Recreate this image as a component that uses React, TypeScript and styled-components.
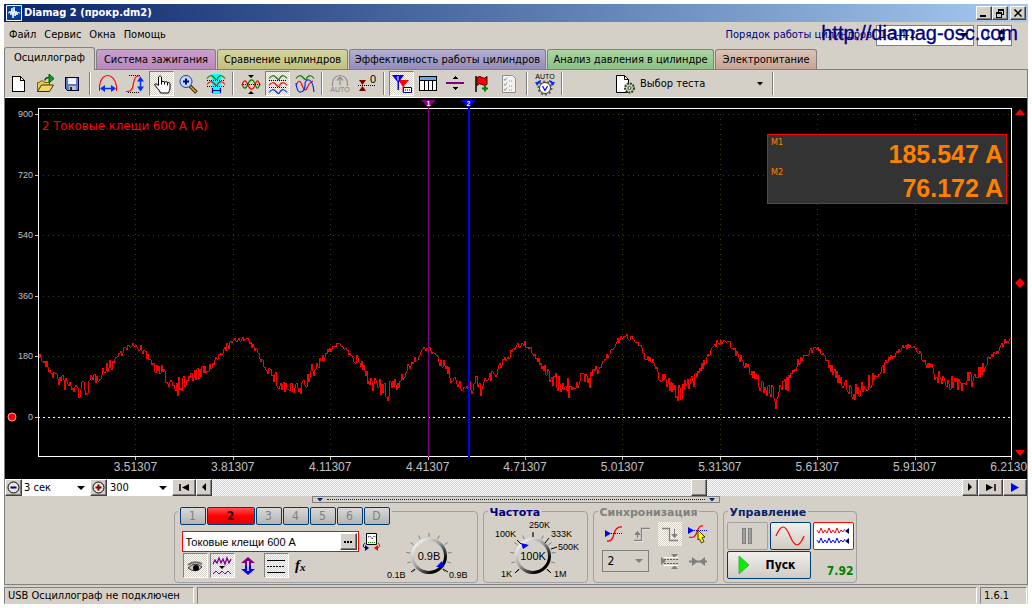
import React from "react";
import styled, { createGlobalStyle, css } from "styled-components";

const face = "#d4d0c8";
const ui = `"DejaVu Sans Condensed", "DejaVu Sans", sans-serif`;
const arial = `"Liberation Sans", Arial, sans-serif`;
const dither = `repeating-conic-gradient(#ffffff 0% 25%, ${face} 0% 50%) 0 0 / 2px 2px`;

const GlobalStyle = createGlobalStyle`
  * { box-sizing: border-box; }
  body { margin: 0; background: #fff; font: 11px/14px ${ui}; color: #000; }
  button, select, input { font: inherit; color: inherit; margin: 0; padding: 0; border-radius: 0; }
  svg { display: block; flex: none; }
`;

const raised = css`
  background: ${face};
  border: 1px solid;
  border-color: #fff #404040 #404040 #fff;
  box-shadow: inset -1px -1px 0 #808080;
`;

const Page = styled.div`padding: 4px 4px 5px 4px;`;
const Window = styled.div`background: ${face}; display: flex; flex-direction: column;`;

const TitleBar = styled.header`
  height: 18px;
  display: flex;
  align-items: center;
  gap: 2px;
  padding: 0 2px;
  background: linear-gradient(90deg, #0a246a, #a6caf0);
  color: #fff;
`;
const WindowTitle = styled.h1`margin: 0; flex: 1; font: bold 11px/16px ${ui};`;
const CaptionButton = styled.button<{ $apart?: boolean }>`
  ${raised}
  width: 16px;
  height: 14px;
  display: flex;
  align-items: center;
  justify-content: center;
  margin-left: ${(p) => (p.$apart ? 0 : -2)}px;
`;

const MenuRow = styled.div`
  position: relative;
  height: 26px;
  display: flex;
  align-items: center;
  padding: 0 16px 0 5px;
`;
const Menu = styled.nav`display: flex; gap: 8px; flex: 1;`;
const MenuItem = styled.button`border: 0; background: none;`;
const OrderLabel = styled.label`color: #000080; margin-right: 4px;`;
const SiteLink = styled.a`
  position: absolute;
  right: 10px;
  top: 0;
  font: 20px/22px ${arial};
  color: #000080;
  text-decoration: none;
  -webkit-text-stroke: 0.3px #000080;
`;
const SelectBox = styled.span<{ $w: number; $h: number; $framed?: boolean; $gap?: number; $off?: boolean }>`
  display: grid;
  align-items: center;
  width: ${(p) => p.$w}px;
  height: ${(p) => p.$h}px;
  margin-right: ${(p) => p.$gap ?? 0}px;
  background: ${(p) => (p.$off ? face : "#fff")};
  border: ${(p) => (p.$framed ? "1px solid #808080" : "0")};
  &::after {
    content: "";
    grid-area: 1 / 1;
    justify-self: end;
    margin-right: 5px;
    border: 4px solid transparent;
    border-top-color: ${(p) => (p.$off ? "#808080" : "#000")};
    border-bottom: 0;
    pointer-events: none;
  }
`;
const Select = styled.select<{ $pad?: number }>`
  appearance: none;
  grid-area: 1 / 1;
  width: 100%;
  height: 100%;
  border: 0;
  background: none;
  padding-left: ${(p) => p.$pad ?? 3}px;
  outline: 0;
  opacity: 1;
`;
const Spinner = styled.span`
  display: flex;
  align-items: center;
  width: 35px;
  height: 21px;
  padding-right: 6px;
  background: #fff;
  border: 1px solid #808080;
`;
const SpinInput = styled.input`border: 0; width: 20px; text-align: center; background: none; flex: 1;`;

const Tabs = styled.div`
  display: flex;
  align-items: flex-end;
  gap: 1px;
  height: 22px;
  border-bottom: 1px solid #808080;
`;
const Tab = styled.button<{ $w: number; $top: string; $bottom: string; $active?: boolean }>`
  width: ${(p) => p.$w}px;
  height: ${(p) => (p.$active ? 23 : 20)}px;
  margin-bottom: ${(p) => (p.$active ? -1 : 0)}px;
  padding-bottom: ${(p) => (p.$active ? 3 : 0)}px;
  border: 1px solid #808080;
  border-bottom: 0;
  border-radius: 3px 3px 0 0;
  background: linear-gradient(${(p) => p.$top}, ${(p) => p.$bottom});
  white-space: nowrap;
`;

const TabPage = styled.main`
  display: flex;
  flex-direction: column;
  border-left: 1px solid #808080;
  border-right: 1px solid #808080;
`;
const Toolbar = styled.div`
  height: 28px;
  display: flex;
  align-items: center;
  border-bottom: 1px solid #fff;
`;
const ToolButton = styled.button<{ $on?: boolean }>`
  width: 25px;
  height: 25px;
  margin: 0 1px;
  display: flex;
  align-items: center;
  justify-content: center;
  border: 1px solid transparent;
  background: none;
  ${(p) => p.$on && css`background: ${dither}; border-color: #808080 #fff #fff #808080;`}
`;
const Divider = styled.span`
  width: 2px;
  height: 23px;
  margin: 0 3px;
  border-left: 1px solid #808080;
  border-right: 1px solid #fff;
`;
const TestButton = styled.button`
  display: flex;
  align-items: center;
  gap: 4px;
  width: 203px;
  height: 25px;
  padding-left: 50px;
  border: 0;
  background: none;
  & > span { flex: 1; text-align: left; }
`;

const Scope = styled.section`
  position: relative;
  display: grid;
  grid-template-columns: 33px 1fr 15px;
  grid-template-rows: 10px 349px 22px;
  background: #000;
  overflow: hidden;
`;
const YAxis = styled.div`
  grid-area: 2 / 1;
  height: 315px;
  padding-right: 5px;
  display: flex;
  flex-direction: column;
  justify-content: space-between;
  text-align: right;
  font: 9px/12px ${arial};
  color: #c0c0c0;
`;
const YLabel = styled.span`
  display: flex;
  align-items: center;
  justify-content: flex-end;
  gap: 11px;
`;
const PlotArea = styled.div`grid-area: 2 / 2; position: relative;`;
const PlotSvg = styled.svg`width: 100%; height: 349px; overflow: visible;`;
const Cursor = styled.div<{ $at: number; $color: string }>`
  position: absolute;
  left: ${(p) => p.$at}%;
  top: -8px;
  bottom: 0;
  width: 16px;
  margin-left: -8px;
  background: linear-gradient(${(p) => p.$color}, ${(p) => p.$color}) 7px 0 / ${(p) => (p.$color === "#0000ff" ? 2 : 1)}px 100% no-repeat;
`;
const PlotTitle = styled.div`
  position: absolute;
  left: 4px;
  top: 10px;
  font: 13px/16px ${ui};
  color: #f00;
`;
const Meter = styled.div`
  position: absolute;
  right: 5px;
  top: 26px;
  width: 240px;
  height: 70px;
  padding: 1px 3px 0;
  display: grid;
  grid-template-columns: auto 1fr;
  background: #333;
  border: 1px solid #f00;
  color: #ff8000;
`;
const MeterTags = styled.div`
  display: flex;
  flex-direction: column;
  gap: 18px;
  font: 9px/12px ${ui};
`;
const MeterValues = styled.div`text-align: right; padding-top: 1px; font: bold 25px/34px ${arial};`;
const XAxis = styled.div`
  grid-area: 3 / 2;
  display: flex;
  font: 12px/20px ${arial};
  color: #c0c0c0;
`;
const XCell = styled.span`
  flex: 1 1 0;
  display: flex;
  justify-content: flex-end;
  & > span { width: 60px; margin-right: -30px; text-align: center; flex: none; }
`;
const Handles = styled.div`
  grid-area: 2 / 3;
  display: flex;
  flex-direction: column;
  justify-content: space-between;
  align-items: center;
`;

const ScrollRow = styled.div`height: 17px; display: flex; background: #fff;`;
const ScrollButton = styled.button<{ $w: number }>`
  ${raised}
  width: ${(p) => p.$w}px;
  height: 17px;
  display: flex;
  align-items: center;
  justify-content: center;
`;
const Track = styled.div`
  flex: 1;
  display: flex;
  background: ${dither};
  &::before { content: ""; flex: 64 1 0; }
  &::after { content: ""; flex: 34 1 0; }
`;
const Thumb = styled.button`${raised} width: 16px; height: 17px;`;

const Splitter = styled.div`
  align-self: center;
  width: 408px;
  height: 7px;
  display: flex;
  align-items: center;
  gap: 4px;
  padding: 0 4px;
  border: 1px solid #808080;
  & > i { flex: 1; border-top: 1px dotted #0a246a; }
`;
const Panels = styled.div`
  display: flex;
  justify-content: center;
  gap: 5px;
  padding: 8px 2px 1px 0;
  border-bottom: 1px solid #808080;
`;
const Panel = styled.section<{ $w: number }>`
  width: ${(p) => p.$w}px;
  height: 72px;
  border: 1px solid #a0a0a0;
  border-radius: 4px;
  padding: 0 3px;
`;
const PanelTitle = styled.h2<{ $color: string }>`
  width: max-content;
  height: 14px;
  margin: -6px 0 0 1px;
  padding: 0 2px;
  background: ${face};
  font: bold 11px/14px "DejaVu Sans", sans-serif;
  color: ${(p) => p.$color};
`;
const ChannelPanel = styled(Panel)`display: flex;`;
const ChannelControls = styled.div`width: 205px;`;
const ChannelTabs = styled.div`
  display: flex;
  gap: 1px;
  width: 214px;
  margin-top: -5px;
  padding-left: 2px;
  background: ${face};
`;
const ChannelTab = styled.button<{ $on?: boolean }>`
  width: ${(p) => (p.$on ? 48 : 26)}px;
  height: 18px;
  border: 1px solid #003c74;
  border-radius: 2px;
  font: ${(p) => (p.$on ? "bold" : "normal")} 12px/14px ${ui};
  color: ${(p) => (p.$on ? "#300" : "#808080")};
  background: ${(p) => (p.$on ? "linear-gradient(#ff5050, #f00 50%, #e80000)" : "linear-gradient(#d8d8d8, #b4b4b4)")};
`;
const ProbeRow = styled.div`display: flex; align-items: center; gap: 3px; margin-top: 6px; padding-left: 4px;`;
const ProbeField = styled.div`
  width: 177px;
  height: 21px;
  display: flex;
  align-items: center;
  padding: 0 1px 0 3px;
  background: #fff;
  border: 1px solid #f00;
`;
const ProbeInput = styled.input`
  flex: 1;
  min-width: 0;
  border: 0;
  outline: 0;
  background: none;
  font: 11px/16px ${arial};
`;
const MoreButton = styled.button`
  ${raised}
  width: 17px;
  height: 17px;
  display: flex;
  align-items: center;
  justify-content: center;
`;
const ToggleRow = styled.div`display: flex; padding-left: 4px; margin-top: 1px;`;
const KnobSlot = styled.div`margin-top: 15px; padding-left: 3px;`;

const SyncGrid = styled.div`
  display: grid;
  grid-template-columns: repeat(4, 28px);
  align-items: center;
  justify-items: center;
  padding: 2px 0 0 3px;
  row-gap: 3px;
`;
const SyncButton = styled.button<{ $on?: boolean }>`
  width: 24px;
  height: 24px;
  border: 0;
  padding: 2px;
  background: ${(p) => (p.$on ? dither : "none")};
`;
const SyncSelect = styled.div`
  grid-column: span 2;
  justify-self: start;
  padding-left: 2px;
  font: 12px/16px ${ui};
`;

const ControlGrid = styled.div`
  display: grid;
  grid-template-columns: repeat(3, 41px);
  gap: 1px 2px;
  padding-top: 2px;
`;
const ControlButton = styled.button<{ $edge: string; $wide?: boolean; $fill?: string }>`
  grid-column: span ${(p) => (p.$wide ? 2 : 1)};
  height: 28px;
  display: flex;
  align-items: center;
  justify-content: center;
  gap: 16px;
  padding-right: ${(p) => (p.$wide ? 4 : 0)}px;
  border: 1px solid ${(p) => p.$edge};
  border-radius: 2px;
  background: ${(p) => p.$fill ?? "linear-gradient(#f0efec, #d0ccc4)"};
  font: bold 12px/16px ${ui};
`;
const Reading = styled.output`
  align-self: end;
  text-align: right;
  font: bold 12px/16px ${ui};
  color: #008000;
`;

const StatusBar = styled.footer`
  display: flex;
  gap: 3px;
  height: 19px;
  padding: 2px 0 0 0;
  margin-right: 1px;
`;
const StatusCell = styled.div<{ $w?: number }>`
  ${(p) => (p.$w ? `width: ${p.$w}px;` : "flex: 1;")}
  padding: 1px 3px;
  border: 1px solid;
  border-color: #808080 #fff ${face} #808080;
  white-space: nowrap;
`;

/* ---------- icons ---------- */

type IconProps = { w?: number; h?: number; children: React.ReactNode; crisp?: boolean };
const Icon = ({ w = 20, h = 20, children, crisp }: IconProps) => (
  <svg width={w} height={h} viewBox={`0 0 ${w} ${h}`} fill="none" stroke="none" shapeRendering={crisp ? "crispEdges" : "auto"} aria-hidden="true">
    {children}
  </svg>
);

/* hump, dip, hump across an 18px wide line centred on y */
const wave = (y: number) => `M1 ${y + 1}Q4.500 ${y - 4} 8 ${y}T12 ${y}Q15.500 ${y - 4} 19 ${y + 1}`;

const NewIcon = () => (
  <Icon crisp><path d="M3.5 2.5h8l4 4v11h-12z" fill="#fff" stroke="#000" /><path d="M11.5 2.5v4h4" stroke="#000" /></Icon>
);
const OpenIcon = () => (
  <Icon>
    <path d="M1.5 17.5V8.500h2l1-1.500h3l1 1.500h5v3" fill="#e8c850" stroke="#806000" />
    <path d="M1.500 17.500l4-6.500h12l-4 6.500z" fill="#f0d870" stroke="#403000" />
    <path d="M9 6.500q0-3 4-3" stroke="#005000" strokeWidth="1.500" />
    <path d="M13 0l5 4.500-5 4.500z" fill="#00a020" stroke="#006000" />
  </Icon>
);
const SaveIcon = () => (
  <Icon crisp>
    <path d="M2.500 3.500h13v13h-11l-2-2z" fill="#5a7cc0" stroke="#000030" />
    <path d="M5 4h8v6H5z" fill="#f4f4f4" /><path d="M6 12h7v4H6z" fill="#c0c0c0" /><path d="M7 13h2v3H7z" fill="#202040" />
  </Icon>
);
const PeriodIcon = () => (
  <Icon>
    <path d="M1.500 12C3 -2 16 -2 18.500 12" stroke="#f00" strokeWidth="1.200" /><path d="M1.500 12v5M18.500 12v5" stroke="#f00" />
    <path d="M3 14.500h14" stroke="#0030ff" strokeWidth="1.500" /><path d="M2 14.500l5-3.500v7zM18 14.500l-5-3.500v7z" fill="#0030ff" />
  </Icon>
);
const AmplitudeIcon = () => (
  <Icon>
    <path d="M1 17.500h2C11 17 6 3 13 2h2" stroke="#f00" strokeWidth="1.200" />
    <path d="M4 1.500h12M3 18.500h12" stroke="#000" strokeDasharray="1 1" />
    <path d="M15.500 5v10" stroke="#0030ff" strokeWidth="1.500" /><path d="M15.500 2.500l-3.500 5h7zM15.500 17.500l-3.500-5h7z" fill="#0030ff" />
  </Icon>
);
const HandIcon = () => (
  <Icon>
    <path d="M6.500 11.500V3q1.500-2.500 3 0v5q1.500-1.500 3 0 1.500-1 3 .500 1.500-.5 2.500 1v5.500q-.5 1.500-1.500 4h-8q-1-3-3-4.500l-3-4q1-2 4 1" fill="#fff" stroke="#000" />
    <path d="M9.500 7v3.500M12.500 8v2.500M15.500 8.500v3" stroke="#000" />
  </Icon>
);
const ZoomIcon = () => (
  <Icon>
    <path d="M11 12l6.500 6.500" stroke="#302000" strokeWidth="3.500" /><path d="M11.500 12.500l5.500 5.500" stroke="#f0b040" strokeWidth="1.500" />
    <circle cx="7" cy="7.500" r="6" fill="#b8dcff" stroke="#304080" />
    <path d="M7 4.500v6M4 7.500h6" stroke="#000080" strokeWidth="2" />
  </Icon>
);
const FitIcon = () => (
  <Icon>
    <path d="M6 0h9v20H6z" fill="#00ffff" />
    <path d={wave(3.5)} stroke="#008000" strokeWidth="1.200" /><path d={wave(9.5)} stroke="#f00" strokeWidth="1.200" />
    <path d="M1 6.500h18M1 12.500h18" stroke="#000" strokeDasharray="1 1" />
    <path d="M6.500 14v5M14.500 14v5M7 16.500h7" stroke="#000080" strokeWidth="1.200" />
  </Icon>
);
const CrossIcon = () => (
  <Icon>
    <path d="M1 10C3 16 5 15 7 10S12 4 14 10 17 15 19 10" stroke="#008000" strokeWidth="1.200" />
    <path d="M1 11C3 5 5 6 7 11S12 17 14 11 17 6 19 11" stroke="#f00" strokeWidth="1.200" />
    <path d="M2 10.500h17" stroke="#000" strokeDasharray="1 1" /><path d="M7 1h6l-3 3zM7 20h6l-3-3z" fill="#000" />
  </Icon>
);
const ThreeWavesIcon = () => (
  <Icon>
    <path d={wave(3.5)} stroke="#008000" strokeWidth="1.200" /><path d={wave(10.5)} stroke="#f00" strokeWidth="1.200" />
    <path d={wave(17.5)} stroke="#0030ff" strokeWidth="1.200" />
    <path d="M1 6.500h18M1 13.500h18" stroke="#000" strokeDasharray="1 1" />
  </Icon>
);
const OverlapIcon = () => (
  <Icon>
    <path d={wave(3.5)} stroke="#008000" strokeWidth="1.200" />
    <path d="M1 12Q4 3 7 11t5 3 6-7" stroke="#f00" strokeWidth="1.200" />
    <path d="M1 9Q2 19 6 18T10 11 14 6 19 18" stroke="#0030ff" strokeWidth="1.200" />
  </Icon>
);
const AutoOffIcon = () => (
  <Icon>
    <path d="M2.500 12C1-2 19-2 17.500 12M10 3v8M7 6.500L10 3l3 3.500" stroke="#909090" strokeWidth="1.200" />
    <text x="10" y="18" textAnchor="middle" fontFamily="Liberation Sans" fontSize="7" fill="#808080">AUTO</text>
  </Icon>
);
const ZeroIcon = () => (
  <Icon>
    <path d="M1 11.500h18" stroke="#000" strokeDasharray="1 1" /><path d="M2 6h7l-3.500 5zM2 17h7l-3.500-5z" fill="#800000" />
    <text x="13" y="9" fontFamily="Liberation Sans" fontSize="11" fill="#000">0</text>
  </Icon>
);
const MarkersIcon = () => (
  <Icon>
    <path d="M6 6h11l-5 6v6h-1.500v-6z" fill="#f00" /><path d="M0 1h12L7 8v8H5.500V8z" fill="#0000ff" />
    <path d="M6 2.500v4M5 3.500l1-1" stroke="#fff" />
    <path d="M11.500 13.500h8v5h-8z" fill="#fff" stroke="#000080" /><path d="M13 16h5" stroke="#000080" strokeDasharray="1 1" />
  </Icon>
);
const TableIcon = () => (
  <Icon crisp>
    <path d="M.5 2.500h17v14H.5z" fill="#fff" stroke="#000" /><path d="M1 3h16v3H1z" fill="#60a8e8" />
    <path d="M0 6.500h18M5.500 6v10M9.500 6v10M13.500 6v10" stroke="#000" />
  </Icon>
);
const SplitIcon = () => (
  <Icon crisp><path d="M0 8h18v2H0z" fill="#800080" /><path d="M6 5h6L9 2zM6 13h6l-3 3z" fill="#000" /></Icon>
);
const FlagIcon = () => (
  <Icon>
    <path d="M3 2v16" stroke="#000" strokeWidth="1.500" />
    <path d="M4 3.500q3-2 5 0t5-1v8q-2 2-5 0t-5 1z" fill="#f00" stroke="#400000" />
    <path d="M12 11.500v6M9 14.500h6" stroke="#008000" strokeWidth="2" />
  </Icon>
);
const CheckListIcon = () => (
  <Icon>
    <path d="M2.500 1.500h10l3 3v14h-13z" fill="#f2f2f2" stroke="#909090" />
    <path d="M4 5l1 1.500 2-3M4 10l1 1.500 2-3M4 15l1 1.500 2-3" stroke="#909090" /><path d="M9 7h3M9 12h3M9 16h3" stroke="#909090" strokeDasharray="1 1" />
  </Icon>
);
const AutoVoltIcon = () => (
  <Icon w={22} h={24}>
    <text x="11" y="7" textAnchor="middle" fontFamily="Liberation Sans" fontSize="7" fill="#000">AUTO</text>
    <circle cx="11" cy="16" r="6.500" stroke="#606060" strokeDasharray="2 2" strokeWidth="2" />
    <circle cx="11" cy="16" r="5.500" fill="#fff" stroke="#303030" />
    <path d="M8.500 14l2.500 4.500 2.500-4.500" stroke="#0000ff" strokeWidth="1.200" />
    <path d="M3 12q1-3 4-3M19 12q-1-3-4-3" stroke="#0030ff" strokeWidth="1.300" />
    <path d="M1 10h5l-3 4zM21 10h-5l3 4z" fill="#0030ff" />
  </Icon>
);
const GearDocIcon = () => (
  <Icon>
    <path d="M.5 1.500h8l4 4v13H.5z" fill="#fff" stroke="#000" /><path d="M8.500 1.500v4h4" stroke="#000" />
    <circle cx="13.500" cy="14" r="4.500" fill="#c8d0c0" stroke="#304020" strokeWidth="2" strokeDasharray="2 1" />
    <circle cx="13.500" cy="14" r="1.500" fill="#fff" stroke="#304020" />
  </Icon>
);
const Tri = ({ dir, color = "#000", bar, big }: { dir: "l" | "r"; color?: string; bar?: boolean; big?: boolean }) => (
  <Icon w={12} h={9}>
    {big && <path d="M2 0v9l8-4.500z" fill={color} />}
    {bar && (dir === "l" ? <path d="M11 1v7L4 4.500z" fill={color} /> : <path d="M1 1v7l7-3.500z" fill={color} />)}
    {!bar && !big && (dir === "l" ? <path d="M8 0v8L4 4z" fill={color} /> : <path d="M4 0v8l4-4z" fill={color} />)}
    {bar && <path d={dir === "l" ? "M2 1v7" : "M10 1v7"} stroke={color} strokeWidth="1.500" />}
  </Icon>
);
const ZoomSign = ({ plus }: { plus?: boolean }) => (
  <Icon w={13} h={13}>
    <circle cx="6.500" cy="6.500" r="5.500" fill="#e8e4dc" stroke="#000" />
    <path d={plus ? "M3.500 6.500h6M6.500 3.500v6" : "M3.500 6.500h6"} stroke={plus ? "#800000" : "#000080"} strokeWidth="2" />
  </Icon>
);

/* ---------- signal ---------- */

const envelope: [number, number][] = [
  [38, 354], [50, 370], [60, 380], [68, 385], [75, 389], [80, 391], [88, 386], [95, 378], [105, 370], [113, 362], [120, 353],
  [127, 347], [135, 346], [142, 350], [148, 357], [155, 367], [163, 375], [172, 382], [180, 384], [187, 381], [195, 375],
  [203, 372], [212, 367], [220, 355], [228, 346], [235, 341], [241, 338], [248, 341], [255, 349], [263, 362], [271, 373],
  [280, 385], [290, 389], [297, 391], [305, 384], [313, 373], [320, 362], [328, 352], [337, 344], [346, 347], [352, 359],
  [360, 363], [366, 374], [372, 382], [380, 388], [388, 394], [393, 386], [396, 381], [399, 390], [401, 376], [408, 368],
  [416, 360], [422, 351], [428, 348], [433, 352], [440, 362], [448, 374], [456, 381], [462, 385], [470, 390], [477, 383],
  [480, 392], [483, 380], [490, 380], [497, 371], [505, 361], [512, 352], [518, 346], [525, 345], [532, 350], [538, 360],
  [545, 370], [553, 379], [560, 385], [568, 387], [576, 382], [584, 379], [592, 376], [600, 367], [607, 357], [615, 345],
  [620, 339], [628, 337], [634, 338], [640, 344], [645, 357], [652, 362], [658, 373], [666, 381], [674, 388], [683, 393],
  [688, 383], [695, 375], [702, 369], [709, 354], [716, 344], [726, 339], [733, 347], [740, 358], [747, 368], [755, 378],
  [763, 387], [770, 391], [777, 395], [784, 387], [790, 378], [797, 366], [804, 355], [811, 350], [816, 348], [822, 353],
  [830, 366], [838, 376], [845, 385], [850, 390], [855, 392], [860, 389], [867, 384], [875, 377], [882, 372], [889, 360],
  [897, 351], [905, 345], [913, 347], [920, 354], [928, 365], [936, 375], [943, 381], [950, 384], [958, 383], [966, 380],
  [974, 376], [982, 370], [989, 360], [997, 351], [1005, 342], [1012, 339],
];

const buildSignal = () => {
  let seed = 7;
  const random = () => (seed = (seed * 16807) % 2147483647) / 2147483647;
  const points: string[] = [];
  let k = 0;
  for (let x = 39; x <= 1011; x += 1) {
    while (k < envelope.length - 2 && envelope[k + 1][0] < x) k += 1;
    const [x0, y0] = envelope[k];
    const [x1, y1] = envelope[k + 1];
    const mean = y0 + ((y1 - y0) * (x - x0)) / (x1 - x0);
    const spread = 3 + Math.max(0, (mean - 352) / 6);
    const spike = random() > 0.94 ? 1.6 : 1;
    points.push(`${x - 38},${Math.round(mean - 108 + (random() - 0.5) * 2 * spread * spike)}`);
  }
  return points.join(" ");
};
const signal = buildSignal();
const gridY = [6, 67, 127, 188, 248];
const gridX = Array.from({ length: 10 }, (_, i) => 97.4 * (i + 1));
const xLabels = ["3.51307", "3.81307", "4.11307", "4.41307", "4.71307", "5.01307", "5.31307", "5.61307", "5.91307", "6.21307"];

const Plot = () => (
  <PlotSvg viewBox="0 0 974 349" preserveAspectRatio="none" fill="none" shapeRendering="crispEdges">
    {gridY.map((y) => (
      <g key={y}>
        <path d={`M0 ${y + 0.5}H974`} stroke="#384000" strokeDasharray="1 4" />
        <path d={`M-3 ${y + 0.5}H0`} stroke="#c0c0c0" />
      </g>
    ))}
    {gridX.map((x) => (
      <g key={x}>
        {x < 970 && <path d={`M${Math.round(x) + 0.5} 6V349`} stroke="#384000" strokeDasharray="1 4" />}
        <path d={`M${Math.round(x) + 0.5 - (x > 970 ? 1 : 0)} 349v3`} stroke="#c0c0c0" />
      </g>
    ))}
    <path d="M-3 309.500H0" stroke="#c0c0c0" />
    <path d="M0 309.500H974" stroke="#fff" strokeDasharray="2 3" />
    <path d="M.5 .5H973.500V348.500H.5Z" stroke="#fff" />
    <polyline points={signal} stroke="#f00" />
  </PlotSvg>
);

const MarkerHead = ({ n, color }: { n: string; color: string }) => (
  <Icon w={16} h={8}>
    <path d="M0 0h15L7.500 8z" fill={color} />
    <text x="7.500" y="6" textAnchor="middle" fontFamily="Liberation Sans" fontSize="7" fontWeight="bold" fill="#fff">{n}</text>
  </Icon>
);

/* ---------- knobs ---------- */

const KnobDial = ({ cx, cy, value }: { cx: number; cy: number; value: string }) => (
  <g>
    <defs>
      <linearGradient id={`ring-${cx}`} x1="0" y1="0" x2="1" y2="1">
        <stop offset="0.150" stopColor="#e8e8e8" /><stop offset="0.450" stopColor="#a0a0a0" /><stop offset="0.800" stopColor="#000" />
      </linearGradient>
    </defs>
    {Array.from({ length: 11 }, (_, i) => {
      const a = ((135 + i * 27) * Math.PI) / 180;
      return <path key={i} d={`M${cx + Math.cos(a) * 19} ${cy + Math.sin(a) * 19}L${cx + Math.cos(a) * 23} ${cy + Math.sin(a) * 23}`} stroke="#808080" />;
    })}
    <circle cx={cx} cy={cy} r="16.500" fill={face} stroke={`url(#ring-${cx})`} strokeWidth="3" />
    <text x={cx} y={cy + 4} textAnchor="middle" fontSize="11">{value}</text>
  </g>
);
const VoltKnob = () => (
  <svg width="84" height="56" viewBox="0 0 84 56" fontFamily="Liberation Sans" role="img" aria-label="Чувствительность 0.9В">
    <KnobDial cx={43} cy={29} value="0.9В" />
    <path d="M50 40l6-6 2 6z" fill="#0000ff" />
    <path d="M29 42l-4 3M57 42l5 3" stroke="#000" />
    <text x="1" y="51" fontSize="9">0.1В</text><text x="63" y="51" fontSize="9">0.9В</text>
  </svg>
);
const FreqKnob = () => (
  <svg width="98" height="64" viewBox="0 0 98 64" fontFamily="Liberation Sans" fontSize="9" role="img" aria-label="Частота 100K">
    <KnobDial cx={46} cy={36} value="100K" />
    <path d="M34 23l8 2-6 4z" fill="#0000ff" />
    <path d="M30 20l4 4M46 12v5M58 23l4-5M64 29l6-2M32 49l-4 4M60 49l4 4" stroke="#000" />
    <text x="8" y="17">100K</text><text x="42" y="8">250K</text><text x="64" y="17">333K</text>
    <text x="71" y="30">500K</text><text x="14" y="57">1K</text><text x="67" y="57">1M</text>
  </svg>
);

export default function App() {
  return (
    <Page>
      <GlobalStyle />
      <Window>
        <TitleBar>
          <Icon w={16} h={16}>
            <path d="M.5.5h15v15H.5z" fill="#0040a0" stroke="#fff" />
            <path d="M2 8h1l1-2 1 4 1-7 1 10 1-11 1 9 1-5 1 4 1-3 1 1h1" stroke="#fff" />
          </Icon>
          <WindowTitle>Diamag 2 (прокр.dm2)</WindowTitle>
          <CaptionButton aria-label="Свернуть"><Icon w={10} h={8} crisp><path d="M1 6h6v2H1z" fill="#000" /></Icon></CaptionButton>
          <CaptionButton aria-label="Восстановить">
            <Icon w={10} h={9} crisp><path d="M3.500 1v3M3 .5h6M3 1.500h6M8.500 1v4.500H7M1 3.500h6M1 4.500h6M1.500 4v4.500h5V4" stroke="#000" /></Icon>
          </CaptionButton>
          <CaptionButton $apart aria-label="Закрыть"><Icon w={10} h={8}><path d="M1.500.5l7 7M8.500.5l-7 7" stroke="#000" strokeWidth="1.500" /></Icon></CaptionButton>
        </TitleBar>

        <MenuRow>
          <Menu>
            <MenuItem>Файл</MenuItem><MenuItem>Сервис</MenuItem><MenuItem>Окна</MenuItem><MenuItem>Помощь</MenuItem>
          </Menu>
          <OrderLabel htmlFor="order">Порядок работы цилиндров</OrderLabel>
          <SelectBox $w={98} $h={21} $framed $gap={3}>
            <Select id="order" $pad={3} defaultValue="1-3-4-2"><option>1-3-4-2</option></Select>
          </SelectBox>
          <Spinner>
            <SpinInput aria-label="Цилиндр" defaultValue="1" />
            <Icon w={7} h={13}><path d="M0 5h7L3.500 0zM0 8h7l-3.500 5z" fill="#000" /></Icon>
          </Spinner>
          <SiteLink href="http://diamag-osc.com">http://diamag-osc.com</SiteLink>
        </MenuRow>

        <Tabs>
          <Tab $active $w={91} $top={face} $bottom={face}>Осциллограф</Tab>
          <Tab $w={120} $top="#c8a0cc" $bottom="#b888bc">Система зажигания</Tab>
          <Tab $w={131} $top="#d4d4a4" $bottom="#c0c07c">Сравнение цилиндров</Tab>
          <Tab $w={197} $top="#b4b0d0" $bottom="#948cb8">Эффективность работы цилиндров</Tab>
          <Tab $w={167} $top="#acd4a4" $bottom="#8cc084">Анализ давления в цилиндре</Tab>
          <Tab $w={102} $top="#dcc4b8" $bottom="#c4a494">Электропитание</Tab>
        </Tabs>

        <TabPage>
          <Toolbar>
            <ToolButton aria-label="Новый"><NewIcon /></ToolButton>
            <ToolButton aria-label="Открыть"><OpenIcon /></ToolButton>
            <ToolButton aria-label="Сохранить"><SaveIcon /></ToolButton>
            <Divider />
            <ToolButton aria-label="Период"><PeriodIcon /></ToolButton>
            <ToolButton aria-label="Амплитуда"><AmplitudeIcon /></ToolButton>
            <ToolButton $on aria-label="Рука"><HandIcon /></ToolButton>
            <ToolButton aria-label="Увеличить"><ZoomIcon /></ToolButton>
            <ToolButton aria-label="Вписать"><FitIcon /></ToolButton>
            <Divider />
            <ToolButton aria-label="Совместить"><CrossIcon /></ToolButton>
            <ToolButton $on aria-label="Раздельно"><ThreeWavesIcon /></ToolButton>
            <ToolButton aria-label="Наложить"><OverlapIcon /></ToolButton>
            <Divider />
            <ToolButton aria-label="Авто"><AutoOffIcon /></ToolButton>
            <ToolButton aria-label="Ноль"><ZeroIcon /></ToolButton>
            <Divider />
            <ToolButton $on aria-label="Маркеры"><MarkersIcon /></ToolButton>
            <ToolButton aria-label="Таблица"><TableIcon /></ToolButton>
            <ToolButton aria-label="Разделить"><SplitIcon /></ToolButton>
            <ToolButton aria-label="Метка"><FlagIcon /></ToolButton>
            <ToolButton aria-label="Список"><CheckListIcon /></ToolButton>
            <Divider />
            <ToolButton aria-label="Автонапряжение"><AutoVoltIcon /></ToolButton>
            <Divider />
            <TestButton>
              <GearDocIcon /><span>Выбор теста</span>
              <Icon w={12} h={4}><path d="M0 0h6L3 3.500z" fill="#000" /></Icon>
            </TestButton>
            <Divider />
          </Toolbar>

          <Scope>
            <YAxis>
              {["900", "720", "540", "360", "180"].map((v) => <YLabel key={v}>{v}</YLabel>)}
              <YLabel><Icon w={10} h={10}><circle cx="5" cy="5" r="4" fill="#f00" stroke="#ffa0a0" /></Icon>0</YLabel>
            </YAxis>
            <PlotArea>
              <Plot />
              <PlotTitle>2 Токовые клещи 600 А (А)</PlotTitle>
              <Cursor $at={40.1} $color="#800080"><MarkerHead n="1" color="#800080" /></Cursor>
              <Cursor $at={44.2} $color="#0000ff"><MarkerHead n="2" color="#0000ff" /></Cursor>
              <Meter>
                <MeterTags><span>М1</span><span>М2</span></MeterTags>
                <MeterValues><div>185.547 A</div><div>76.172 A</div></MeterValues>
              </Meter>
            </PlotArea>
            <XAxis>{xLabels.map((v) => <XCell key={v}><span>{v}</span></XCell>)}</XAxis>
            <Handles>
              <Icon w={10} h={8}><path d="M0 7h10L5 1z" fill="#f00" /></Icon>
              <Icon w={10} h={10}><path d="M5 0l5 5-5 5-5-5z" fill="#f00" /></Icon>
              <Icon w={10} h={8}><path d="M0 1h10L5 7z" fill="#f00" /></Icon>
            </Handles>
          </Scope>

          <ScrollRow>
            <ScrollButton $w={17} aria-label="Меньше"><ZoomSign /></ScrollButton>
            <SelectBox $w={68} $h={17}><Select $pad={2} aria-label="Развёртка" defaultValue="3"><option value="3">3 сек</option></Select></SelectBox>
            <ScrollButton $w={17} aria-label="Больше"><ZoomSign plus /></ScrollButton>
            <SelectBox $w={65} $h={17}><Select $pad={3} aria-label="Масштаб" defaultValue="300"><option>300</option></Select></SelectBox>
            <ScrollButton $w={24} aria-label="В начало"><Tri dir="l" bar /></ScrollButton>
            <ScrollButton $w={16} aria-label="Назад"><Tri dir="l" /></ScrollButton>
            <Track><Thumb aria-label="Ползунок" /></Track>
            <ScrollButton $w={16} aria-label="Вперёд"><Tri dir="r" /></ScrollButton>
            <ScrollButton $w={25} aria-label="В конец"><Tri dir="r" bar /></ScrollButton>
            <ScrollButton $w={24} aria-label="Воспроизвести"><Tri dir="r" color="#0000ff" big /></ScrollButton>
          </ScrollRow>

          <Splitter>
            <Icon w={6} h={4}><path d="M0 0h6L3 3.500z" fill="#0a246a" /></Icon><i />
            <Icon w={6} h={4}><path d="M0 0h6L3 3.500z" fill="#0a246a" /></Icon>
          </Splitter>

          <Panels>
            <ChannelPanel $w={304}>
              <ChannelControls>
                <ChannelTabs>
                  {["1", "2", "3", "4", "5", "6", "D"].map((c) => <ChannelTab key={c} $on={c === "2"}>{c}</ChannelTab>)}
                </ChannelTabs>
                <ProbeRow>
                  <ProbeField>
                    <ProbeInput aria-label="Датчик" defaultValue="Токовые клещи 600 А" />
                    <MoreButton aria-label="Выбрать"><Icon w={9} h={2} crisp><path d="M0 0h2v2H0zM3 0h2v2H3zM6 0h2v2H6z" fill="#000" /></Icon></MoreButton>
                  </ProbeField>
                  <Icon w={20}>
                    <path d="M4.500 1.500h10v11h-10z" fill="#fff" stroke="#000" /><path d="M6 5l2-1 2 3 2-3 2 1" stroke="#000" strokeDasharray="1 1" />
                    <path d="M6 10.500h8" stroke="#008000" strokeDasharray="1 1" />
                    <path d="M3 11q-4 4 1 5" stroke="#000080" /><path d="M3 13l4 3-4 3z" fill="#000080" />
                    <path d="M16 11q4 4-1 5" stroke="#f00" /><path d="M16 13l-4 3 4 3z" fill="#f00" />
                  </Icon>
                </ProbeRow>
                <ToggleRow>
                  <ToolButton $on aria-label="Видимость">
                    <Icon><path d="M3 12q7-7 14-1-6 7-14 1z" fill="#c8c8c8" stroke="#303030" /><circle cx="11" cy="12" r="3" fill="#000" /><path d="M3 9q6-5 14-1" stroke="#707070" strokeWidth="2" /></Icon>
                  </ToolButton>
                  <ToolButton $on aria-label="Фильтр">
                    <Icon>
                      <path d="M1 8l2-4 2 3 2-5 2 5 2-4 2 5 2-6 2 5 2-4" stroke="#800080" strokeWidth="1.300" />
                      <path d="M7 10h6l-3 3z" fill="#000" /><path d="M1 18l3-3 3 3 3-3 3 3 3-3 3 3" stroke="#800080" />
                    </Icon>
                  </ToolButton>
                  <ToolButton aria-label="Инверсия">
                    <Icon><path d="M9 1l7 6h-4v3H6V7H2z" fill="#800080" /><path d="M9 19l7-6h-4v-3H6v3H2z" fill="#0000ff" /><path d="M9 5v10" stroke="#fff" strokeWidth="1.500" /></Icon>
                  </ToolButton>
                  <ToolButton $on aria-label="Уровень">
                    <Icon crisp><path d="M1 4.500h18M1 16.500h18" stroke="#000" /><path d="M1 10.500h18" stroke="#000" strokeDasharray="2 1" /></Icon>
                  </ToolButton>
                  <ToolButton aria-label="Функция">
                    <Icon><text x="2" y="14" fontFamily="Liberation Serif" fontStyle="italic" fontWeight="bold" fontSize="15" fill="#000">f</text><text x="7" y="15" fontFamily="Liberation Serif" fontStyle="italic" fontWeight="bold" fontSize="11" fill="#000">x</text></Icon>
                  </ToolButton>
                </ToggleRow>
              </ChannelControls>
              <KnobSlot><VoltKnob /></KnobSlot>
            </ChannelPanel>

            <Panel $w={105}>
              <PanelTitle $color="#000080">Частота</PanelTitle>
              <FreqKnob />
            </Panel>

            <Panel $w={125}>
              <PanelTitle $color="#808080">Синхронизация</PanelTitle>
              <SyncGrid>
                <SyncButton aria-label="Уровень синхронизации">
                  <Icon><path d="M3 17q5 1 7-7t8-7" stroke="#f00" strokeWidth="1.300" /><path d="M5 9.500h14" stroke="#0000ff" strokeDasharray="1 1" /><path d="M1 6l6 3.500L1 13z" fill="#0000ff" /></Icon>
                </SyncButton>
                <SyncButton aria-label="По фронту">
                  <Icon><path d="M2 17.500h8V5.500h8" stroke="#fff" /><path d="M2 16.500h7.500V4.500H18" stroke="#808080" strokeWidth="1.300" /><path d="M5.500 14V8M3 10.500l2.500-3 2.500 3z" stroke="#808080" fill="#808080" /></Icon>
                </SyncButton>
                <SyncButton $on aria-label="По спаду">
                  <Icon><path d="M2 4.500h7.500v12H18" stroke="#808080" strokeWidth="1.300" /><path d="M14.500 5v7M12 10.500l2.500 3 2.500-3z" stroke="#808080" fill="#808080" /></Icon>
                </SyncButton>
                <SyncButton aria-label="Ручная">
                  <Icon>
                    <path d="M1 13q6 2 8-5t6-6" stroke="#f00" strokeWidth="1.300" /><path d="M2 6.500h17" stroke="#0000ff" strokeDasharray="1 1" /><path d="M0 3l6 3.500L0 10z" fill="#0000ff" />
                    <path d="M10 6l7 7-3 .500 2 4-2.500 1.500-2-4-1.500 1z" fill="#ff0" stroke="#403000" />
                  </Icon>
                </SyncButton>
                <SyncSelect>
                  <SelectBox $w={47} $h={22} $framed $off><Select $pad={5} aria-label="Канал синхронизации" defaultValue="2"><option>2</option></Select></SelectBox>
                </SyncSelect>
                <SyncButton aria-label="Окно">
                  <Icon><path d="M4 8.500h14M4 12.500h14" stroke="#606060" strokeDasharray="2 1" /><path d="M1 6l5 4-5 4zM11 3h7l-3.500 4zM11 18h7l-3.500-4z" fill="#808080" /><path d="M4 6.500h14M4 14.500h14" stroke="#fff" /></Icon>
                </SyncButton>
                <SyncButton aria-label="Центр">
                  <Icon><path d="M1 10.500h18" stroke="#808080" strokeWidth="2" /><path d="M4 6l6 4.500L4 15zM17 6l-6 4.500 6 4.500z" fill="#808080" /></Icon>
                </SyncButton>
              </SyncGrid>
            </Panel>

            <Panel $w={134}>
              <PanelTitle $color="#0a246a">Управление</PanelTitle>
              <ControlGrid>
                <ControlButton $edge="#a0a0a0" $fill={face} aria-label="Пауза">
                  <Icon w={12} h={16} crisp><path d="M1.500.5h3v15h-3zM7.500.5h3v15h-3z" fill="#a0a0a0" stroke="#808080" /></Icon>
                </ControlButton>
                <ControlButton $edge="#003c74" aria-label="Однократно">
                  <Icon w={30}><path d="M1 10C6-2 10-2 15 10s9 12 14 0" stroke="#f00" strokeWidth="1.200" /></Icon>
                </ControlButton>
                <ControlButton $edge="#f00" $fill="#fff" aria-label="Непрерывно">
                  <Icon w={34} h={22}>
                    <path d="M1 5l2 3 2-5 2 5 2-3 2 3 2-5 2 5 2-3 2 3 2-5 2 5 2-3 2 2 2-3" stroke="#f00" />
                    <path d="M1 15l2 3 2-5 2 5 2-3 2 3 2-5 2 5 2-3 2 3 2-5 2 5 2-3 2 2 2-3" stroke="#0000ff" />
                    <path d="M33 3v6l-4-3zM33 13v6l-4-3z" fill="#000080" />
                  </Icon>
                </ControlButton>
                <ControlButton $edge="#003c74" $wide>
                  <Icon w={12} h={20}><path d="M1 1l10 9L1 19z" fill="#00f000" stroke="#60a060" /></Icon>Пуск
                </ControlButton>
                <Reading>7.92</Reading>
              </ControlGrid>
            </Panel>
          </Panels>
        </TabPage>

        <StatusBar>
          <StatusCell $w={190}>USB Осциллограф не подключен</StatusCell>
          <StatusCell />
          <StatusCell $w={47}>1.6.1</StatusCell>
        </StatusBar>
      </Window>
    </Page>
  );
}
